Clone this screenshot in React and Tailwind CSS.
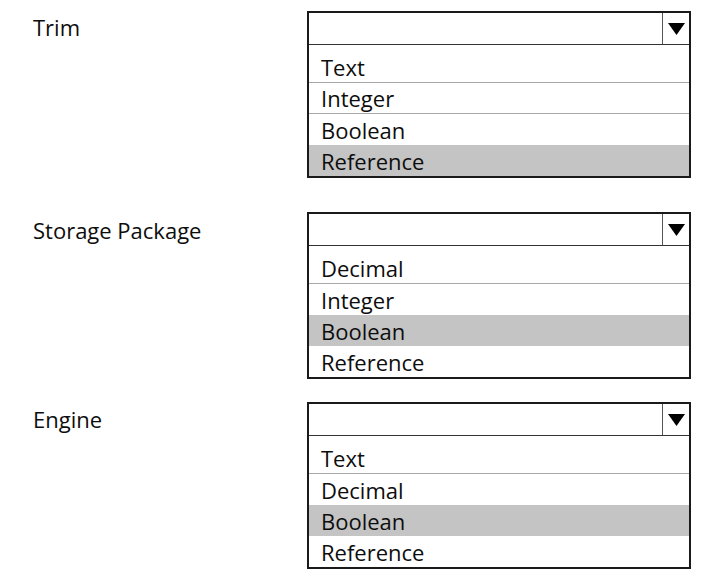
import React from 'react';

const sections = [
  { label: 'Trim', options: ['Text', 'Integer', 'Boolean', 'Reference'], selected: 3, gap: 'mt-[11px]', labelPad: 'pt-[5px]' },
  { label: 'Storage Package', options: ['Decimal', 'Integer', 'Boolean', 'Reference'], selected: 2, gap: 'mt-[34px]', labelPad: 'pt-[7px]' },
  { label: 'Engine', options: ['Text', 'Decimal', 'Boolean', 'Reference'], selected: 2, gap: 'mt-[23px]', labelPad: 'pt-[6px]' },
];

const Dropdown = ({ options, selected }) => (
  <div className="w-[384px] border-2 border-[#1a1a1a] bg-white">
    {/* closed select header */}
    <div className="flex h-[32px] border-b border-[#333]">
      <div className="flex-1" />
      <div className="flex w-[27px] items-center justify-center border-l border-[#555]">
        <svg width="17" height="12" viewBox="0 0 17 12">
          <polygon points="0,0 17,0 8.5,12" fill="#000" />
        </svg>
      </div>
    </div>
    {/* open option list */}
    <div className="pt-[7px]">
      {options.map((opt, i) => (
        <div
          key={opt}
          className={`flex h-[31px] items-center pl-[12px] text-[22px] leading-none text-[#0d0d0d] ${
            i === selected ? 'bg-[#c4c4c4]' : 'bg-white'
          } ${i < options.length - 1 && i !== selected && i + 1 !== selected ? 'border-b border-[#a8a8a8]' : ''}`}
        >
          {opt}
        </div>
      ))}
    </div>
  </div>
);

export default function App() {
  return (
    <div className="min-h-screen w-[706px] bg-white font-['Open_Sans',sans-serif]">
      {sections.map((s) => (
        <div key={s.label} className={`flex ${s.gap}`}>
          <div className={`w-[307px] pl-[33px] text-[22px] leading-[22px] text-[#0d0d0d] ${s.labelPad}`}>
            {s.label}
          </div>
          <Dropdown options={s.options} selected={s.selected} />
        </div>
      ))}
    </div>
  );
}
